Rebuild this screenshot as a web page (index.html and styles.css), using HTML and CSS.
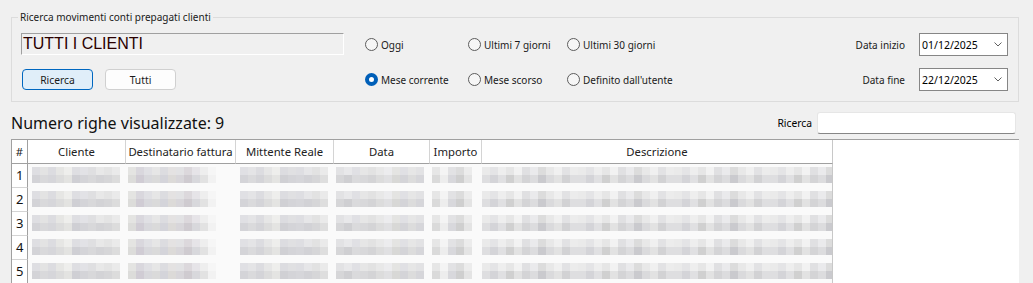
FILE: index.html
```html
<!DOCTYPE html>
<html lang="it">
<head>
  <meta charset="UTF-8" />
  <meta name="viewport" content="width=device-width, initial-scale=1.0">
  <title>Movimenti conti prepagati clienti</title>
  <link rel="stylesheet" href="styles.css">
</head>
<body>
  <fieldset class="filter">
    <legend>Ricerca movimenti conti prepagati clienti</legend>
    <div class="filter-grid">
      <div class="client-field">TUTTI I CLIENTI</div>
      <label class="radio"><span class="circle"></span>Oggi</label>
      <label class="radio"><span class="circle"></span>Ultimi 7 giorni</label>
      <label class="radio"><span class="circle"></span>Ultimi 30 giorni</label>
      <span class="date-label">Data inizio</span>
      <div class="date-box">
        <span>01/12/2025</span>
        <svg width="8" height="5" viewBox="0 0 8 5"><polyline points="0.5,0.5 4,4 7.5,0.5" fill="none" stroke="#606060" stroke-width="1"/></svg>
      </div>

      <div class="buttons">
        <button class="btn primary">Ricerca</button>
        <button class="btn">Tutti</button>
      </div>
      <label class="radio"><span class="circle on"></span>Mese corrente</label>
      <label class="radio"><span class="circle"></span>Mese scorso</label>
      <label class="radio"><span class="circle"></span>Definito dall'utente</label>
      <span class="date-label">Data fine</span>
      <div class="date-box">
        <span>22/12/2025</span>
        <svg width="8" height="5" viewBox="0 0 8 5"><polyline points="0.5,0.5 4,4 7.5,0.5" fill="none" stroke="#606060" stroke-width="1"/></svg>
      </div>
    </div>
  </fieldset>

  <div class="toolbar">
    <span class="count">Numero righe visualizzate: 9</span>
    <span class="search-label">Ricerca</span>
    <div class="search"></div>
  </div>

  <div class="grid">
    <div class="cols">
      <div class="head">#</div>
      <div class="head">Cliente</div>
      <div class="head">Destinatario fattura</div>
      <div class="head">Mittente Reale</div>
      <div class="head">Data</div>
      <div class="head">Importo</div>
      <div class="head last">Descrizione</div>

      <div class="num">1</div>
      <div class="cell c1"></div><div class="cell c2"></div><div class="cell c3"></div>
      <div class="cell c4"></div><div class="cell c5"></div><div class="cell c6"></div>

      <div class="num">2</div>
      <div class="cell c1"></div><div class="cell c2"></div><div class="cell c3"></div>
      <div class="cell c4"></div><div class="cell c5"></div><div class="cell c6"></div>

      <div class="num">3</div>
      <div class="cell c1"></div><div class="cell c2"></div><div class="cell c3"></div>
      <div class="cell c4"></div><div class="cell c5"></div><div class="cell c6"></div>

      <div class="num">4</div>
      <div class="cell c1"></div><div class="cell c2"></div><div class="cell c3"></div>
      <div class="cell c4"></div><div class="cell c5"></div><div class="cell c6"></div>

      <div class="num">5</div>
      <div class="cell c1"></div><div class="cell c2"></div><div class="cell c3"></div>
      <div class="cell c4"></div><div class="cell c5"></div><div class="cell c6"></div>
    </div>
  </div>
</body>
</html>
```

FILE: styles.css
```css
* { box-sizing: border-box; }

body {
  margin: 0;
  height: 283px;
  overflow: hidden;
  background: #f0f0f0;
  color: #000;
  font-family: "Noto Sans", "Open Sans", sans-serif;
  font-size: 10px;
}

/* filter group */
.filter {
  margin: 9px 14px 0 11px;
  padding: 8px 10px 10px 9px;
  border: 1px solid #dcdcdc;
  min-width: 0;
}

.filter legend {
  margin-left: -3px;
  padding: 0 2px;
  line-height: 16px;
  color: #1a1a1a;
}

.filter-grid {
  display: grid;
  grid-template-columns: 344px 103px 99px 1fr auto 89px;
  grid-template-rows: 23px 23px;
  row-gap: 12px;
  align-items: center;
}

.client-field {
  align-self: start;
  width: 323px;
  height: 22px;
  border: 1px solid;
  border-color: #a0a0a0 #fff #fff #a0a0a0;
  padding-left: 1px;
  font-family: "Liberation Sans", Arial, sans-serif;
  font-size: 16px;
  line-height: 20px;
  color: #2a0000;
}

.buttons {
  display: flex;
  gap: 12px;
  padding-left: 1px;
}

.btn {
  width: 71px;
  height: 21px;
  padding: 0;
  border: 1px solid #d0d0d0;
  border-radius: 4px;
  background: #fdfdfd;
  font: inherit;
  font-size: 10.3px;
  color: #1a1a1a;
}

.btn.primary {
  background: #e0eef9;
  border-color: #0067c0;
}

.radio {
  display: flex;
  align-items: center;
  gap: 3px;
  color: #1a1a1a;
}

.circle {
  width: 13px;
  height: 13px;
  border: 1px solid #5c5c5c;
  border-radius: 50%;
  background: #f6f6f6;
}

.circle.on {
  border: 4px solid #005fb8;
  background: #fff;
}

.date-label {
  grid-column: 5;
  padding-right: 14px;
  text-align: right;
  color: #1a1a1a;
}

.date-box {
  display: flex;
  align-items: center;
  justify-content: space-between;
  height: 23px;
  padding: 0 5px 0 2px;
  border: 1px solid #868686;
  background: #fff;
  font-size: 10.5px;
}

/* count + search */
.toolbar {
  display: flex;
  align-items: center;
  height: 22px;
  margin: 10px 17px 5px 11px;
}

.count {
  font-size: 16px;
  color: #111;
}

.search-label {
  margin-left: auto;
  margin-right: 5px;
  font-size: 10.3px;
}

.search {
  width: 199px;
  height: 22px;
  background: #fff;
  border: 1px solid #e6e6e6;
  border-bottom-color: #868686;
  border-radius: 3px;
}

/* data grid */
.grid {
  height: 144px;
  overflow: hidden;
  margin: 0 14px 0 11px;
  border-top: 1px solid #a0a0a0;
  border-left: 1px solid #a0a0a0;
  background: #fff;
}

.cols {
  display: grid;
  grid-template-columns: 16px 98px 110px 98px 96px 52px 351px;
  width: 821px;
}

.head {
  height: 24px;
  line-height: 23px;
  text-align: center;
  font-size: 11.3px;
  color: #222;
  border-right: 1px solid #d4d4d4;
  border-bottom: 1px solid #a0a0a0;
  white-space: nowrap;
  overflow: hidden;
}

.head:first-child { border-right-color: #a0a0a0; }
.head.last { border-right-color: #c8c8c8; }

.num {
  height: 24px;
  padding-left: 4px;
  line-height: 23px;
  font-size: 13px;
  color: #111;
  border-right: 1px solid #a0a0a0;
  border-bottom: 1px solid #d4d4d4;
}

.cell {
  height: 24px;
  padding-top: 3px;
  background: #fafafa;
}

.cell::before {
  content: "";
  display: block;
  height: 16px;
  background-repeat: repeat-x;
  background-size: 88px 8px, 88px 8px;
  background-position: 0 0, 0 8px;
}

.c1::before {
  width: 88px;
  margin-left: 4px;
  background-image:
    linear-gradient(90deg, #dedee2 0 8px, #e3e3e3 0 16px, #dcdce0 0 24px, #e6e6e4 0 32px, #eeeeec 0 40px, #dedee2 0 48px, #e2e2e6 0 56px, #dfdfe1 0 64px, #e8e8e8 0 72px, #e4e4e4 0 80px, #eaeaea 0 88px),
    linear-gradient(90deg, #d3d3d7 0 8px, #d9d9db 0 16px, #d6d6da 0 24px, #dcdcdc 0 32px, #e3e3e1 0 40px, #cfcfd4 0 48px, #d4d4d8 0 56px, #d8d8da 0 64px, #d3d3d6 0 72px, #d6d6d8 0 80px, #dcdcdc 0 88px);
}

.c2::before {
  width: 88px;
  margin-left: 2px;
  background-image:
    linear-gradient(90deg, #e4e4e2 0 8px, #d9d7dd 0 16px, #e0e0e4 0 24px, #e6e6e6 0 32px, #dcdce0 0 40px, #e4e2e2 0 48px, #e2e2e4 0 56px, #dcd8dc 0 64px, #e6e4e8 0 72px, #eeeeee 0 80px, #f6f6f6 0 88px),
    linear-gradient(90deg, #dcdcda 0 8px, #d0ccd4 0 16px, #d8d8dc 0 24px, #dadada 0 32px, #d4d4da 0 40px, #dcdad8 0 48px, #d8d6da 0 56px, #cfcbd0 0 64px, #d8d8dc 0 72px, #e2e2e2 0 80px, #f2f2f2 0 88px);
}

.c3::before {
  width: 88px;
  margin-left: 4px;
  background-image:
    linear-gradient(90deg, #e0e0e4 0 8px, #e4e4e6 0 16px, #dcdce0 0 24px, #e6e6e6 0 32px, #eeeeec 0 40px, #dcdce0 0 48px, #e0e0e2 0 56px, #dedee2 0 64px, #e6e6e8 0 72px, #e2e2e2 0 80px, #eaeaea 0 88px),
    linear-gradient(90deg, #d4d4d8 0 8px, #dadadc 0 16px, #d4d4d8 0 24px, #dcdcdc 0 32px, #e4e4e2 0 40px, #d0d0d4 0 48px, #d4d4d8 0 56px, #d6d6da 0 64px, #d2d2d6 0 72px, #d6d6d8 0 80px, #dedede 0 88px);
}

.c4::before {
  width: 88px;
  margin-left: 2px;
  background-image:
    linear-gradient(90deg, #e2e2e4 0 8px, #e8e8ea 0 16px, #e0e0e4 0 24px, #e6e6e6 0 32px, #e2e2e2 0 40px, #e8e8e8 0 48px, #ececee 0 56px, #e4e4e2 0 64px, #e0e0e4 0 72px, #e6e6e6 0 80px, #e2e2e4 0 88px),
    linear-gradient(90deg, #d6d6d8 0 8px, #cfcfd2 0 16px, #dadadc 0 24px, #d8d8da 0 32px, #d4d4d6 0 40px, #dcdcdc 0 48px, #e0e0e2 0 56px, #d8d8d6 0 64px, #d4d4d8 0 72px, #dcdcdc 0 80px, #d6d6da 0 88px);
}

.c5::before {
  width: 40px;
  margin-left: 2px;
  background-size: 40px 8px, 40px 8px;
  background-image:
    linear-gradient(90deg, #e6e6e6 0 8px, #f4f4f4 0 16px, #e2e2e4 0 24px, #dcdcdc 0 32px, #ececec 0 40px),
    linear-gradient(90deg, #dadada 0 8px, #ededed 0 16px, #d8d8dc 0 24px, #cfcfcf 0 32px, #e4e4e4 0 40px);
}

.c6::before {
  width: 350px;
  background-size: 96px 8px, 96px 8px;
  background-image:
    linear-gradient(90deg, #eaeaea 0 8px, #e4e4e6 0 16px, #eeeeee 0 24px, #e6e6e6 0 32px, #f2f2f2 0 40px, #e0e0e2 0 48px, #eaeaec 0 56px, #dcdcdc 0 64px, #e8e8e8 0 72px, #f0f0f0 0 80px, #e2e2e4 0 88px, #ececec 0 96px),
    linear-gradient(90deg, #dedee0 0 8px, #d4d4d8 0 16px, #e0e0e2 0 24px, #d0d0d0 0 32px, #e2e2e2 0 40px, #d4d4d6 0 48px, #dcdcde 0 56px, #cacace 0 64px, #dadadc 0 72px, #e2e2e2 0 80px, #d2d2d4 0 88px, #dedee0 0 96px);
}

.c6 { border-right: 1px solid #c8c8c8; }
```
